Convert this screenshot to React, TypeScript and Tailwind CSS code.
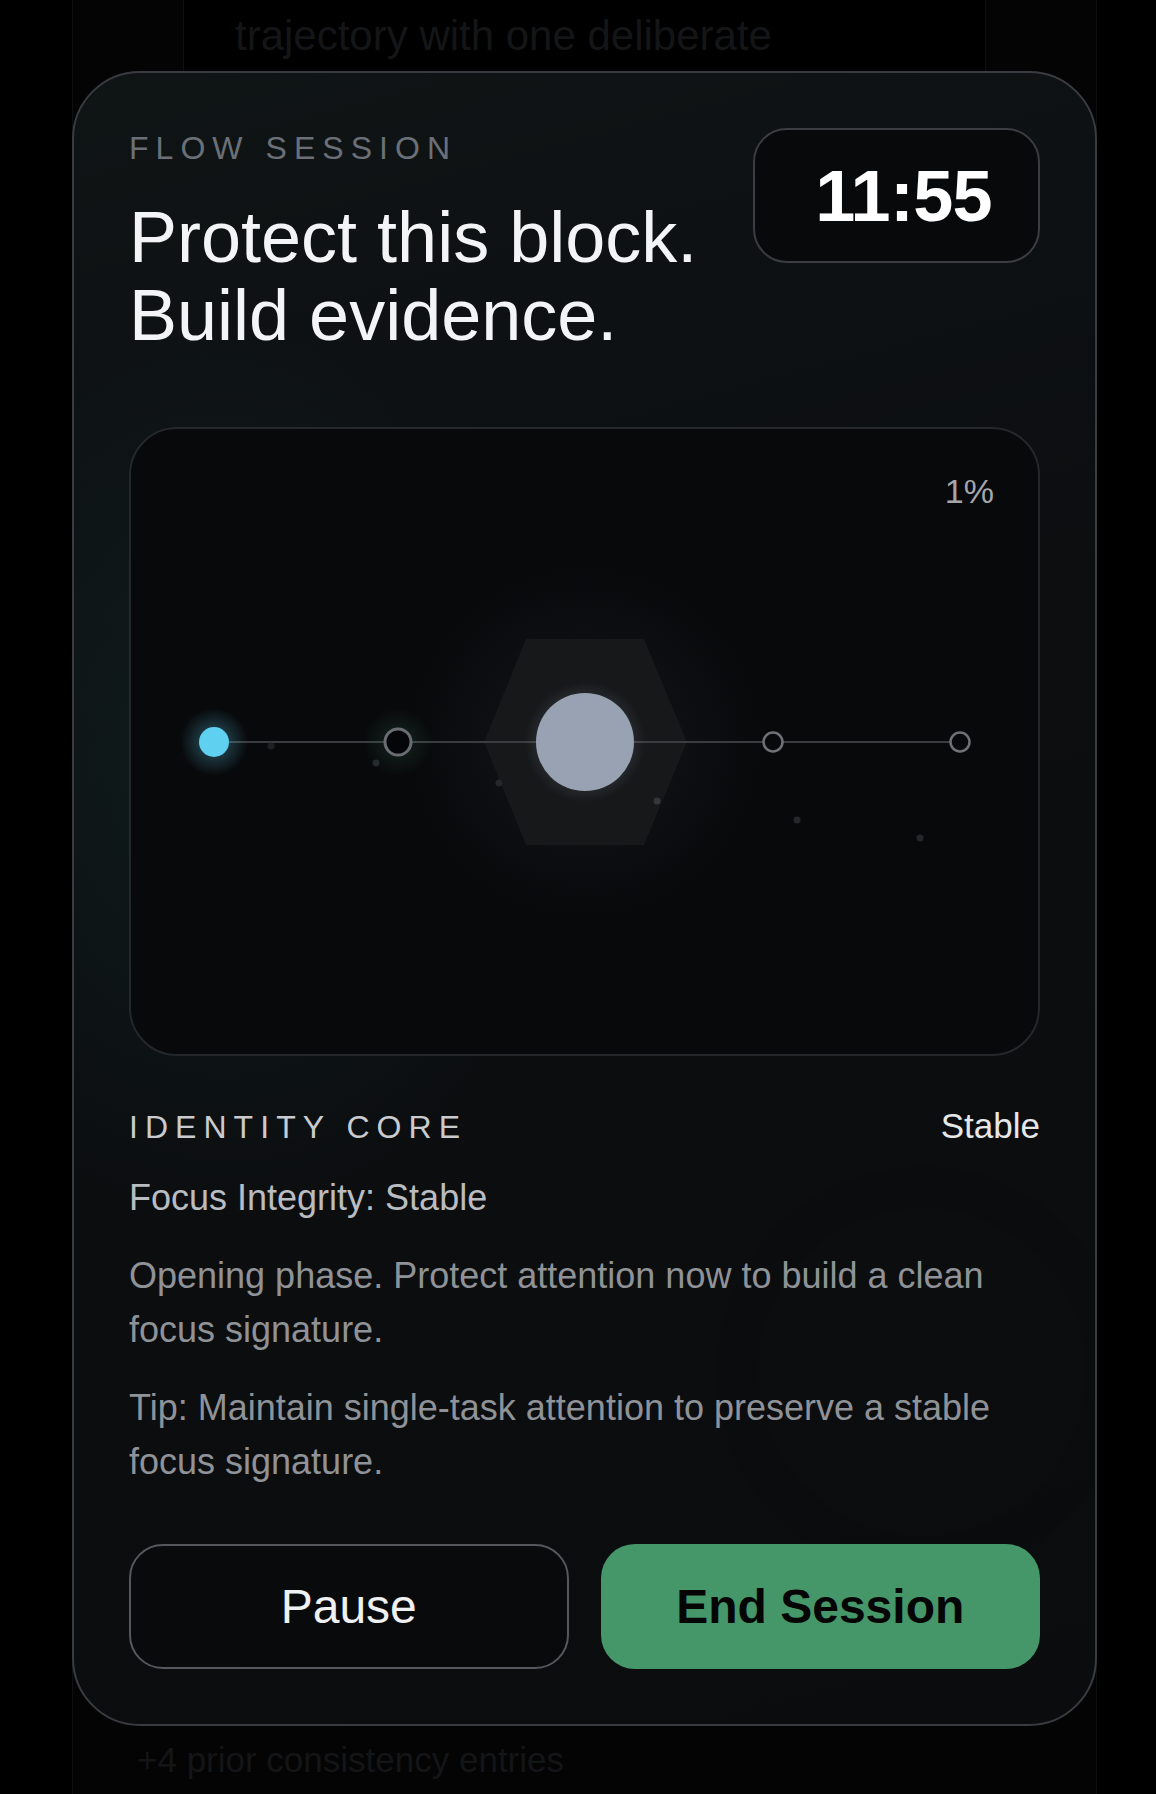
import React from "react";

function FlowGraph() {
  const particles: [number, number, string][] = [
    [140, 317, "#1e2124"],
    [245, 334, "#25282b"],
    [368, 354, "#25282b"],
    [526, 372, "#34373a"],
    [666, 391, "#25282b"],
    [789, 409, "#23262a"],
  ];
  return (
    <svg
      width="907"
      height="625"
      viewBox="0 0 907 625"
      className="absolute inset-0"
    >
      <defs>
        <radialGradient id="gCyan">
          <stop offset="0" stopColor="#5fd0ef" stopOpacity="0.4" />
          <stop offset="1" stopColor="#5fd0ef" stopOpacity="0" />
        </radialGradient>
        <radialGradient id="gGreen">
          <stop offset="0" stopColor="#3f8f66" stopOpacity="0.22" />
          <stop offset="1" stopColor="#3f8f66" stopOpacity="0" />
        </radialGradient>
        <radialGradient id="gHalo">
          <stop offset="0" stopColor="#15181b" stopOpacity="0.9" />
          <stop offset="1" stopColor="#15181b" stopOpacity="0" />
        </radialGradient>
        <radialGradient id="gCore">
          <stop offset="0.6" stopColor="#aab4c4" stopOpacity="0.2" />
          <stop offset="1" stopColor="#aab4c4" stopOpacity="0" />
        </radialGradient>
      </defs>
      <circle cx="454" cy="313" r="175" fill="url(#gHalo)" />
      <polygon
        points="353,313 395,210 513,210 556,313 513,416 395,416"
        fill="#16181a"
      />
      <line x1="83" y1="313" x2="829" y2="313" stroke="#3a3c40" strokeWidth="2" />
      {particles.map(([x, y, c], i) => (
        <circle key={i} cx={x} cy={y} r="3.5" fill={c} />
      ))}
      <circle cx="83" cy="313" r="34" fill="url(#gCyan)" />
      <circle cx="83" cy="313" r="15" fill="#5fd0ef" />
      <circle cx="267" cy="313" r="34" fill="url(#gGreen)" />
      <circle cx="267" cy="313" r="13" fill="#050607" stroke="#696c71" strokeWidth="3" />
      <circle cx="454" cy="313" r="60" fill="url(#gCore)" />
      <circle cx="454" cy="313" r="49" fill="#98a2b3" />
      <circle cx="642" cy="313" r="9.5" fill="#08090b" stroke="#6e7176" strokeWidth="2.5" />
      <circle cx="829" cy="313" r="9.5" fill="#08090b" stroke="#6e7176" strokeWidth="2.5" />
    </svg>
  );
}

export default function App() {
  return (
    <div className="relative h-[1794px] w-[1156px] overflow-hidden bg-black font-['Liberation_Sans',Arial,sans-serif]">
      {/* background page */}
      <div className="ml-[72px] flex h-full w-[1025px] flex-col border-x border-[#0e0f11] bg-[#040405]">
        <div className="mx-[110px] h-[72px] border-x border-[#0f1012] bg-black pl-[51px] pt-[12px]">
          <p className="whitespace-nowrap text-[42px] leading-[48px] text-[#141517]">
            trajectory with one deliberate
          </p>
        </div>
        <p className="mt-auto pb-[14px] pl-[64px] text-[35px] leading-[40px] text-[#141517]">
          +4 prior consistency entries
        </p>
      </div>

      {/* modal card */}
      <div className="absolute left-[72px] top-[71px] w-[1025px] overflow-hidden rounded-[68px] border-2 border-[#3a3b40] bg-[linear-gradient(165deg,#0f1415_0%,#0c0e10_40%,#0b0c0e_100%)] px-[55px] pb-[55px] pt-[55px]">
        <div className="pointer-events-none absolute left-[-200px] top-[250px] h-[900px] w-[700px] rounded-full bg-[radial-gradient(closest-side,rgba(24,64,58,0.28),rgba(24,64,58,0))]" />
        <div className="pointer-events-none absolute left-[658px] top-[1109px] h-[380px] w-[380px] rounded-full border-[10px] border-black/15 blur-sm" />

        <div className="relative">
          {/* header */}
          <div className="flex items-start justify-between">
            <div>
              <p className="text-[32px] leading-[40px] tracking-[0.22em] text-[#6b7078]">
                FLOW SESSION
              </p>
              <h1 className="mt-[30px] text-[72px] font-normal leading-[78px] text-[#f3f4f6]">
                Protect this block.
                <br />
                Build evidence.
              </h1>
            </div>
            <div className="flex h-[135px] w-[287px] items-center justify-center rounded-[34px] border-2 border-[#3c3d42] bg-[#08090b] pl-[14px]">
              <span className="text-[72px] font-bold leading-none tracking-[-0.01em] text-white">
                11:55
              </span>
            </div>
          </div>

          {/* visual panel */}
          <div className="relative mt-[73px] h-[629px] overflow-hidden rounded-[48px] border-2 border-[#25272b] bg-[#08090b]">
            <FlowGraph />
            <div className="relative flex justify-end pr-[44px] pt-[42px]">
              <span className="text-[34px] leading-[40px] text-[#a3a6ab]">1%</span>
            </div>
          </div>

          {/* identity */}
          <div className="mt-[50px] flex items-baseline justify-between">
            <p className="text-[32px] leading-[40px] tracking-[0.22em] text-[#c9cbce]">
              IDENTITY CORE
            </p>
            <p className="text-[35px] leading-[40px] text-[#e6e7e9]">Stable</p>
          </div>
          <p className="mt-6 text-[36px] leading-[54px] text-[#b9bcc0]">
            Focus Integrity: Stable
          </p>
          <p className="mt-6 text-[36px] leading-[54px] text-[#8f9297]">
            Opening phase. Protect attention now to build a clean focus signature.
          </p>
          <p className="mt-6 text-[36px] leading-[54px] text-[#8f9297]">
            Tip: Maintain single-task attention to preserve a stable focus signature.
          </p>

          {/* buttons */}
          <div className="mt-[55px] grid grid-cols-2 gap-8">
            <button className="flex h-[125px] items-center justify-center rounded-[34px] border-2 border-[#55575c] bg-[#090a0c] text-[48px] text-[#eef0f2]">
              Pause
            </button>
            <button className="flex h-[125px] items-center justify-center rounded-[34px] bg-[#45976a] text-[48px] font-bold text-[#050505]">
              End Session
            </button>
          </div>
        </div>
      </div>
    </div>
  );
}
